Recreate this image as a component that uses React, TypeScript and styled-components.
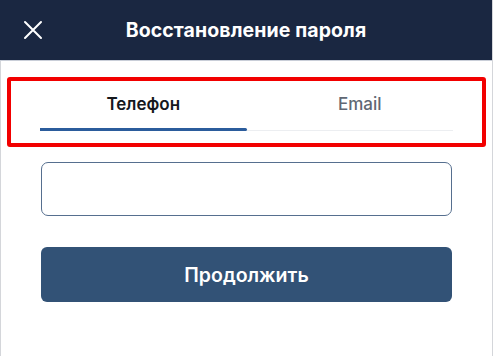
import React, { useState } from "react";
import styled, { createGlobalStyle } from "styled-components";

const Global = createGlobalStyle`
  html, body { margin: 0; padding: 0; background: #ffffff; }
  body { font-family: Inter, "Noto Sans", "Liberation Sans", sans-serif; }
  * { box-sizing: border-box; }
`;

const Panel = styled.div`
  width: 493px;
  height: 356px;
  background: #ffffff;
  border-left: 1px solid #d4d6da;
  border-right: 1px solid #d4d6da;
  display: flex;
  flex-direction: column;
`;

const Header = styled.header`
  height: 61px;
  background: #1a2741;
  border-bottom: 1px solid #c9ced8;
  display: grid;
  grid-template-columns: 1fr auto 1fr;
  align-items: center;
  margin-left: -1px;
`;

const CloseButton = styled.button`
  justify-self: start;
  margin-left: 22px;
  width: 22px;
  height: 22px;
  padding: 0;
  border: none;
  background: none;
  display: flex;
  align-items: center;
  justify-content: center;
  cursor: pointer;
`;

const Title = styled.h1`
  margin: 0;
  color: #ffffff;
  font-size: 19.5px;
  font-weight: 700;
  letter-spacing: 0.1px;
`;

const Highlight = styled.div`
  margin: 16px 6px 0 6px;
  border: 4px solid #f20000;
  border-radius: 3px;
  padding: 0 29px 12px 29px;
`;

const TabList = styled.div`
  display: grid;
  grid-template-columns: 1fr 1fr;
  box-shadow: inset 0 -1px 0 #eceef1;
`;

const Tab = styled.button<{ $active: boolean; $shift?: number }>`
  position: relative;
  border: none;
  background: none;
  padding: 13px 0 16px ${(p) => p.$shift ?? 0}px;
  font-family: inherit;
  font-size: 17px;
  line-height: 21px;
  font-weight: ${(p) => (p.$active ? 600 : 500)};
  color: ${(p) => (p.$active ? "#16181d" : "#606773")};
  cursor: pointer;
  &::after {
    content: "";
    position: absolute;
    left: 0;
    right: 0;
    bottom: 0;
    height: 3px;
    border-radius: 0 2px 2px 0;
    background: ${(p) => (p.$active ? "#2b5c9c" : "transparent")};
  }
`;

const Form = styled.div`
  padding: 15px 40px 0 40px;
  display: flex;
  flex-direction: column;
  gap: 31px;
`;

const Input = styled.input`
  height: 54px;
  width: 100%;
  border: 1px solid #566f8f;
  border-radius: 7px;
  padding: 0 14px;
  font-family: inherit;
  font-size: 16px;
  outline: none;
`;

const Submit = styled.button`
  height: 55px;
  width: 100%;
  border: none;
  border-radius: 6px;
  background: #325276;
  color: #ffffff;
  font-family: inherit;
  font-size: 19.5px;
  font-weight: 600;
  cursor: pointer;
`;

export default function App() {
  const [tab, setTab] = useState<"phone" | "email">("phone");
  return (
    <>
      <Global />
      <Panel>
        <Header>
          <CloseButton aria-label="Закрыть">
            <svg width="20" height="20" viewBox="0 0 20 20" fill="none">
              <path d="M2 2L18 18M18 2L2 18" stroke="#ffffff" strokeWidth="2" strokeLinecap="round" />
            </svg>
          </CloseButton>
          <Title>Восстановление пароля</Title>
          <span />
        </Header>
        <Highlight>
          <TabList>
            <Tab $active={tab === "phone"} onClick={() => setTab("phone")}>Телефон</Tab>
            <Tab $active={tab === "email"} $shift={20} onClick={() => setTab("email")}>Email</Tab>
          </TabList>
        </Highlight>
        <Form>
          <Input />
          <Submit>Продолжить</Submit>
        </Form>
      </Panel>
    </>
  );
}
